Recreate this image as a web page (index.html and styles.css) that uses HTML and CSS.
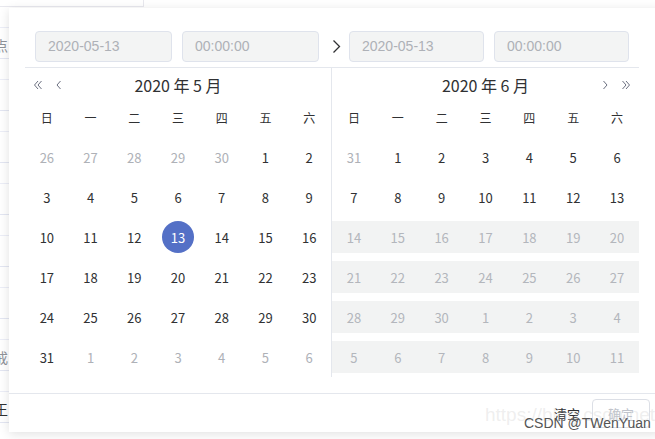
FILE: index.html
```html
<!DOCTYPE html>
<html lang="zh">
<head>
<meta charset="utf-8">
<link rel="stylesheet" href="styles.css">
</head>
<body>
<div class="page">
  <div class="topbar"></div>
  <div class="table">
    <div class="trow"><span class="tcell">点</span></div>
    <div class="trow"></div>
    <div class="trow"></div>
    <div class="trow"></div>
    <div class="trow"></div>
    <div class="trow"></div>
    <div class="trow"><span class="tcell">戒</span></div>
    <div class="trow"><span class="tcell dark">王</span></div>
  </div>
</div>

<div class="picker">
  <div class="range">
    <div class="head">
      <div class="grp grp-l">
        <div class="inp w137">2020-05-13</div>
        <div class="inp w137">00:00:00</div>
      </div>
      <div class="sep">
        <svg width="9" height="15" viewBox="0 0 9 15"><path d="M1.5 1.5 L7.5 7.5 L1.5 13.5" fill="none" stroke="#303133" stroke-width="1.3"/></svg>
      </div>
      <div class="grp grp-r">
        <div class="inp w135">2020-05-13</div>
        <div class="inp w135">00:00:00</div>
      </div>
    </div>
    <div class="panels">
      <div class="panel left">
        <div class="ph">
          <span class="nav navl">
            <svg class="ico" width="10" height="10" viewBox="0 0 10 10"><path d="M5 1 L1.5 5 L5 9 M8.5 1 L5 5 L8.5 9" fill="none" stroke="#6b6f80" stroke-width="1"/></svg>
            <svg class="ico" width="6" height="10" viewBox="0 0 6 10"><path d="M4.5 1 L1 5 L4.5 9" fill="none" stroke="#6b6f80" stroke-width="1"/></svg>
          </span>
          <span class="title">2020 年 5 月</span>
        </div>
        <div class="wk"><span>日</span><span>一</span><span>二</span><span>三</span><span>四</span><span>五</span><span>六</span></div>
        <div class="days">
          <div class="row"><span class="d off">26</span><span class="d off">27</span><span class="d off">28</span><span class="d off">29</span><span class="d off">30</span><span class="d">1</span><span class="d">2</span></div>
          <div class="row"><span class="d">3</span><span class="d">4</span><span class="d">5</span><span class="d">6</span><span class="d">7</span><span class="d">8</span><span class="d">9</span></div>
          <div class="row"><span class="d">10</span><span class="d">11</span><span class="d">12</span><span class="d"><b class="sel">13</b></span><span class="d">14</span><span class="d">15</span><span class="d">16</span></div>
          <div class="row"><span class="d">17</span><span class="d">18</span><span class="d">19</span><span class="d">20</span><span class="d">21</span><span class="d">22</span><span class="d">23</span></div>
          <div class="row"><span class="d">24</span><span class="d">25</span><span class="d">26</span><span class="d">27</span><span class="d">28</span><span class="d">29</span><span class="d">30</span></div>
          <div class="row"><span class="d">31</span><span class="d off">1</span><span class="d off">2</span><span class="d off">3</span><span class="d off">4</span><span class="d off">5</span><span class="d off">6</span></div>
        </div>
      </div>
      <div class="panel right">
        <div class="ph">
          <span class="title">2020 年 6 月</span>
          <span class="nav navr">
            <svg class="ico" width="6" height="10" viewBox="0 0 6 10"><path d="M1.5 1 L5 5 L1.5 9" fill="none" stroke="#6b6f80" stroke-width="1"/></svg>
            <svg class="ico" width="10" height="10" viewBox="0 0 10 10"><path d="M1.5 1 L5 5 L1.5 9 M5 1 L8.5 5 L5 9" fill="none" stroke="#6b6f80" stroke-width="1"/></svg>
          </span>
        </div>
        <div class="wk"><span>日</span><span>一</span><span>二</span><span>三</span><span>四</span><span>五</span><span>六</span></div>
        <div class="days">
          <div class="row"><span class="d off">31</span><span class="d">1</span><span class="d">2</span><span class="d">3</span><span class="d">4</span><span class="d">5</span><span class="d">6</span></div>
          <div class="row"><span class="d">7</span><span class="d">8</span><span class="d">9</span><span class="d">10</span><span class="d">11</span><span class="d">12</span><span class="d">13</span></div>
          <div class="row dis"><span class="d">14</span><span class="d">15</span><span class="d">16</span><span class="d">17</span><span class="d">18</span><span class="d">19</span><span class="d">20</span></div>
          <div class="row dis"><span class="d">21</span><span class="d">22</span><span class="d">23</span><span class="d">24</span><span class="d">25</span><span class="d">26</span><span class="d">27</span></div>
          <div class="row dis"><span class="d">28</span><span class="d">29</span><span class="d">30</span><span class="d">1</span><span class="d">2</span><span class="d">3</span><span class="d">4</span></div>
          <div class="row dis"><span class="d">5</span><span class="d">6</span><span class="d">7</span><span class="d">8</span><span class="d">9</span><span class="d">10</span><span class="d">11</span></div>
        </div>
      </div>
    </div>
  </div>
  <div class="foot">
    <span class="clear">清空</span>
    <span class="ok">确定</span>
  </div>
</div>

<div class="wm">
  <span class="wm-url">https://blog.csdn.net/weixin_43923494</span>
  <span class="wm-name">CSDN @TWenYuan</span>
</div>
</body>
</html>
```

FILE: styles.css
```css
html, body {
  margin: 0;
  padding: 0;
}
body {
  width: 655px;
  height: 439px;
  overflow: hidden;
  background: #fff;
  font-family: "Noto Sans CJK SC", "Noto Sans", sans-serif;
  position: relative;
}

/* background page */
.page {
  width: 655px;
}
.topbar {
  width: 143px;
  height: 6px;
  border-bottom: 1px solid #e8e8ee;
  border-right: 1px solid #e8e8ee;
}
.trow {
  height: 51px;
  border-bottom: 1px solid #e3e6f2;
  position: relative;
}
.trow::after {
  content: "";
  position: absolute;
  left: 0;
  right: 0;
  top: 20px;
  border-top: 1px solid #eceef7;
}
.tcell {
  display: block;
  padding-top: 28px;
  margin-left: -6px;
  font-size: 14px;
  line-height: 20px;
  color: #909399;
}
.tcell.dark { color: #303133; }

/* picker */
.picker {
  position: absolute;
  left: 9px;
  top: 8px;
  width: 652px;
  height: 424px;
  background: #fff;
  box-shadow: 0 2px 10px rgba(0, 0, 0, 0.12);
  display: flex;
  flex-direction: column;
}
.range {
  margin-left: 16px;
  width: 614px;
}
.head {
  height: 60px;
  box-sizing: border-box;
  padding-top: 23px;
  border-bottom: 1px solid #e4e7ed;
  display: flex;
}
.grp {
  display: flex;
  gap: 10px;
}
.grp-l {
  width: 296px;
  padding-left: 10px;
}
.grp-r {
  width: 280px;
}
.sep {
  width: 18px;
  height: 31px;
  display: flex;
  align-items: center;
  padding-left: 1px;
  box-sizing: border-box;
}
.sep svg { display: block; }
.inp {
  height: 31px;
  box-sizing: border-box;
  border: 1px solid #dfe3ec;
  border-radius: 4px;
  background: #f3f4f4;
  color: #aeb1b7;
  font-family: "Liberation Sans", Arial, sans-serif;
  font-size: 14px;
  line-height: 29px;
  padding-left: 12px;
}
.w137 { width: 137px; }
.w135 { width: 135px; }

.panels {
  display: flex;
}
.panel.left {
  width: 306px;
  border-right: 1px solid #e4e7ed;
}
.panel.right {
  width: 307px;
}
.ph {
  height: 34px;
  position: relative;
  display: flex;
  align-items: center;
  justify-content: center;
}
.title {
  font-size: 16px;
  color: #303133;
  line-height: 34px;
}
.nav {
  position: absolute;
  top: 12px;
  display: flex;
  gap: 13px;
}
.navl { left: 8px; }
.navr { right: 8px; }
.ico { display: block; }

.wk {
  height: 30px;
  margin-bottom: 5px;
  display: grid;
  grid-template-columns: repeat(7, 1fr);
  align-items: center;
  font-size: 12px;
  color: #303133;
  text-align: center;
}
.days .row {
  height: 40px;
  display: grid;
  grid-template-columns: repeat(7, 1fr);
  align-items: center;
  box-sizing: border-box;
  padding: 4px 0;
}
.d {
  height: 32px;
  display: flex;
  align-items: center;
  justify-content: center;
  font-size: 13px;
  color: #303133;
}
.d.off { color: #aeb1b7; }
.row.dis .d {
  background: #f2f3f3;
  color: #b3b6bc;
}
.sel {
  width: 32px;
  height: 32px;
  border-radius: 50%;
  background: #5470c6;
  color: #fff;
  font-weight: normal;
  display: flex;
  align-items: center;
  justify-content: center;
}

.foot {
  margin-top: 16px;
  height: 39px;
  border-top: 1px solid #e4e7ed;
  display: flex;
  align-items: center;
  justify-content: flex-end;
  padding-right: 11px;
  gap: 12px;
}
.clear {
  font-size: 13px;
  color: #303133;
}
.ok {
  width: 58px;
  height: 29px;
  box-sizing: border-box;
  border: 1px solid #dcdfe6;
  border-radius: 4px;
  font-size: 13px;
  color: #c0c4cc;
  display: flex;
  align-items: center;
  justify-content: center;
}

/* watermark */
.wm {
  position: absolute;
  left: 485px;
  top: 404px;
  width: 170px;
  height: 35px;
  pointer-events: none;
}
.wm-url {
  position: absolute;
  left: 0;
  top: 0;
  font-family: "Liberation Sans", Arial, sans-serif;
  font-size: 19px;
  color: rgba(200, 200, 200, 0.3);
  white-space: nowrap;
}
.wm-name {
  position: absolute;
  left: 39px;
  top: 11px;
  font-family: "Liberation Sans", Arial, sans-serif;
  font-size: 14px;
  color: #555;
  white-space: nowrap;
}
```
